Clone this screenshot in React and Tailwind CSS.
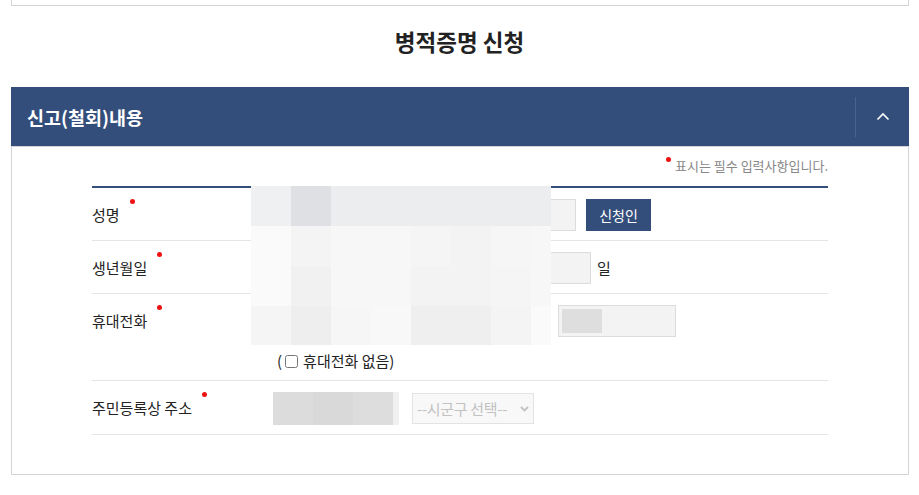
import React from 'react';

// redacted mosaic blocks (rows of 40px cells, last column 20px)
const mosaic = [
  ['bg-[#eef0f2]', 'bg-[#dfe0e4]', 'bg-[#ecedef]', 'bg-[#ecedef]', 'bg-[#ecedef]', 'bg-[#ecedef]', 'bg-[#ecedef]', 'bg-[#ecedef]'],
  ['bg-[#fafafa]', 'bg-[#f4f4f4]', 'bg-[#f7f7f7]', 'bg-[#f7f7f7]', 'bg-[#f5f5f5]', 'bg-[#f3f3f3]', 'bg-[#f6f6f6]', 'bg-[#f7f7f7]'],
  ['bg-[#fafafa]', 'bg-[#f1f1f1]', 'bg-[#f7f7f7]', 'bg-[#f7f7f7]', 'bg-[#f3f3f3]', 'bg-[#f3f3f3]', 'bg-[#f5f5f5]', 'bg-[#f7f7f7]'],
  ['bg-[#f5f5f5]', 'bg-[#eeeeee]', 'bg-[#f6f6f6]', 'bg-[#f8f8f8]', 'bg-[#efefef]', 'bg-[#efefef]', 'bg-[#f4f4f4]', 'bg-[#fafafa]'],
];
const rowHeights = ['h-[40px]', 'h-[40px]', 'h-[40px]', 'h-[39px]'];

const Required = () => (
  <span className="absolute right-[-15px] top-[-6px] w-[5px] h-[5px] rounded-full bg-[#ee1111]" />
);

const Label = ({ children }) => (
  <div className="w-[180px] shrink-0 h-[32px] flex items-center">
    <span className="relative text-[15px] leading-[20px] text-[#222]">
      {children}
      <Required />
    </span>
  </div>
);

const Field = ({ className = '', children }) => (
  <div className={`h-[32px] border border-[#dcdcdc] bg-[#f3f3f3] ${className}`}>{children}</div>
);

const Row = ({ label, children }) => (
  <div className="flex items-start pt-[11px] pb-[9px] border-b border-[#e5e5e5]">
    <Label>{label}</Label>
    <div className="flex-1">{children}</div>
  </div>
);

const App = () => {
  return (
    <div className="w-[919px] h-[495px] bg-white font-['Noto_Sans_CJK_KR','Noto_Sans',sans-serif] overflow-hidden">
      {/* previous box */}
      <div className="ml-[11px] w-[898px] h-[6px] border-x border-b border-[#d5d5d5]" />

      {/* title */}
      <div className="h-[81px] pt-[20px] text-center">
        <h2 className="text-[22.5px] leading-[30px] font-bold text-[#222]">병적증명 신청</h2>
      </div>

      {/* panel */}
      <div className="ml-[11px] w-[898px]">
        <div className="h-[59px] bg-[#344e7b] flex items-center">
          <h3 className="flex-1 pl-[16px] text-[18.5px] leading-[24px] font-bold text-white">신고(철회)내용</h3>
          <div className="w-px h-[40px] bg-[#4a6290]" />
          <button type="button" className="w-[53px] h-full flex items-center justify-center text-white">
            <svg width="14" height="9" viewBox="0 0 14 9" fill="none">
              <path d="M1.5 7.5L7 2l5.5 5.5" stroke="white" strokeWidth="1.6" />
            </svg>
          </button>
        </div>

        <div className="h-[329px] border border-[#d5d5d5] px-[80px] pt-[9px]">
          <p className="flex items-start justify-end text-[13px] leading-[20px] text-[#888]">
            <span className="w-[5px] h-[5px] rounded-full bg-[#ee1111] mt-[1px] mr-[4px]" />
            표시는 필수 입력사항입니다.
          </p>

          <div className="relative mt-[10px] border-t-2 border-[#344e7b]">
            <Row label="성명">
              <div className="flex items-center">
                <Field className="w-[304px]" />
                <button type="button" className="ml-[10px] w-[65px] h-[32px] bg-[#344e7b] text-white text-[14px] leading-[18px]">
                  신청인
                </button>
              </div>
            </Row>

            <Row label="생년월일">
              <div className="flex items-center">
                <div className="w-[269px] flex items-center gap-[6px] text-[15px] text-[#222]">
                  <Field className="w-[80px]" />
                  <span>년</span>
                  <Field className="w-[60px]" />
                  <span>월</span>
                </div>
                <Field className="w-[50px]" />
                <span className="ml-[6px] text-[15px] leading-[20px] text-[#222]">일</span>
              </div>
            </Row>

            <Row label="휴대전화">
              <div className="flex items-center">
                <div className="w-[286px] flex items-center gap-[6px]">
                  <Field className="w-[120px]" />
                  <Field className="w-[120px]" />
                </div>
                <Field className="w-[118px] p-[3px]">
                  <div className="w-[40px] h-full bg-[#dedede]" />
                </Field>
              </div>
              <label className="mt-[14px] pl-[5px] flex items-center h-[20px] text-[15px] leading-[20px] text-[#222]">
                (
                <input type="checkbox" className="w-[13px] h-[13px] ml-[3px] mr-[5px]" />
                휴대전화 없음)
              </label>
            </Row>

            <Row label="주민등록상 주소">
              <div className="flex items-center">
                <div className="ml-[1px] flex h-[33px]">
                  <div className="w-[40px] bg-[#dcdcdc]" />
                  <div className="w-[40px] bg-[#d9d9d9]" />
                  <div className="w-[40px] bg-[#dddddd]" />
                  <div className="w-[6px] bg-[#f0f0f0]" />
                </div>
                <div className="ml-[13px] w-[122px] h-[31px] border border-[#e3e3e3] bg-[#f8f8f8] flex items-center justify-between pl-[4px] pr-[4px]">
                  <span className="text-[15px] leading-[20px] text-[#c2c2c2] tracking-[-0.3px]">--시군구 선택--</span>
                  <svg width="9" height="6" viewBox="0 0 9 6" fill="none">
                    <path d="M1 1l3.5 3.5L8 1" stroke="#c2c2c2" strokeWidth="1.8" />
                  </svg>
                </div>
              </div>
            </Row>

            {/* redacted region */}
            <div className="absolute left-[159px] top-[-2px] w-[300px]">
              {mosaic.map((row, i) => (
                <div key={i} className={`flex ${rowHeights[i]}`}>
                  {row.map((c, j) => (
                    <div key={j} className={`${j === 7 ? 'w-[20px]' : 'w-[40px]'} ${c}`} />
                  ))}
                </div>
              ))}
            </div>
          </div>
        </div>
      </div>
    </div>
  );
};

export default App;
